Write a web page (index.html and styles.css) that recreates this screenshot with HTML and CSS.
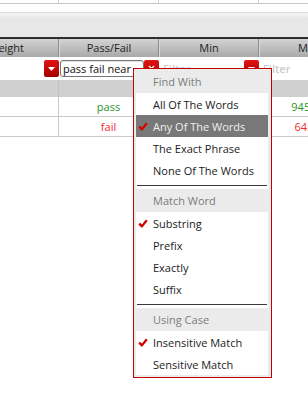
FILE: index.html
```html
<!DOCTYPE html>
<html lang="en">

<head>
    <meta charset="UTF-8">
    <title>Grid filter</title>
    <link rel="stylesheet" href="styles.css">
</head>

<body>
    <div class="cols last-row">
        <span></span><span></span><span></span><span></span>
    </div>
    <div class="spacer"></div>
    <div class="toolbar"></div>

    <div class="cols head">
        <div class="cell first">Weight</div>
        <div class="cell">Pass/Fail</div>
        <div class="cell">Min</div>
        <div class="cell">Max</div>
    </div>

    <div class="cols filters">
        <div class="cell">
            <input class="field" placeholder="Filter">
            <span class="btn">
                <svg width="7" height="4" viewBox="0 0 7 4"><path d="M0 0H7L3.5 4Z" fill="#fff"/></svg>
            </span>
        </div>
        <div class="cell">
            <input class="field focus" value="pass fail near">
            <span class="btn">
                <svg width="7" height="7" viewBox="0 0 7 7"><path d="M1 1L6 6M6 1L1 6" stroke="#fff" stroke-width="1.4"/></svg>
            </span>
        </div>
        <div class="cell">
            <input class="field" placeholder="Filter">
            <span class="btn">
                <svg width="7" height="4" viewBox="0 0 7 4"><path d="M0 0H7L3.5 4Z" fill="#fff"/></svg>
            </span>
        </div>
        <div class="cell">
            <input class="field" placeholder="Filter">
            <span class="btn">
                <svg width="7" height="4" viewBox="0 0 7 4"><path d="M0 0H7L3.5 4Z" fill="#fff"/></svg>
            </span>
        </div>
    </div>

    <div class="cols group">
        <div class="cell"></div><div class="cell"></div><div class="cell"></div><div class="cell"></div>
    </div>

    <div class="cols data">
        <div class="cell"></div>
        <div class="cell pass">pass</div>
        <div class="cell"></div>
        <div class="cell pass">945.12</div>
    </div>
    <div class="cols data">
        <div class="cell"></div>
        <div class="cell fail">fail</div>
        <div class="cell"></div>
        <div class="cell fail">64.53</div>
    </div>

    <div class="menu">
        <div class="menu-title">Find With</div>
        <div class="menu-group">
            <div class="menu-item"><span class="mark"></span>All Of The Words</div>
            <div class="menu-item active"><span class="mark"><svg width="10" height="9" viewBox="0 0 10 9"><path d="M1.2 4.6L3.9 7.4L8.8 1.2" fill="none" stroke="#d40000" stroke-width="2.3" stroke-linejoin="round"/></svg></span>Any Of The Words</div>
            <div class="menu-item"><span class="mark"></span>The Exact Phrase</div>
            <div class="menu-item"><span class="mark"></span>None Of The Words</div>
            <div class="menu-sep"></div>
        </div>
        <div class="menu-title">Match Word</div>
        <div class="menu-group">
            <div class="menu-item"><span class="mark"><svg width="10" height="9" viewBox="0 0 10 9"><path d="M1.2 4.6L3.9 7.4L8.8 1.2" fill="none" stroke="#d40000" stroke-width="2.3" stroke-linejoin="round"/></svg></span>Substring</div>
            <div class="menu-item"><span class="mark"></span>Prefix</div>
            <div class="menu-item"><span class="mark"></span>Exactly</div>
            <div class="menu-item"><span class="mark"></span>Suffix</div>
            <div class="menu-sep"></div>
        </div>
        <div class="menu-title">Using Case</div>
        <div class="menu-group">
            <div class="menu-item"><span class="mark"><svg width="10" height="9" viewBox="0 0 10 9"><path d="M1.2 4.6L3.9 7.4L8.8 1.2" fill="none" stroke="#d40000" stroke-width="2.3" stroke-linejoin="round"/></svg></span>Insensitive Match</div>
            <div class="menu-item"><span class="mark"></span>Sensitive Match</div>
        </div>
    </div>
</body>

</html>
```

FILE: styles.css
```css
* {
    margin: 0;
    padding: 0;
    box-sizing: border-box;
}

html,
body {
    width: 100%;
    height: 100%;
    background: #fff;
}

body {
    font-family: "Open Sans", sans-serif;
    font-size: 11px;
    color: #222;
    overflow: hidden;
    position: relative;
}

.cols {
    display: grid;
    grid-template-columns: repeat(4, 100px);
    width: 400px;
    margin-left: -41px;
}

.last-row {
    height: 4px;
    border-bottom: 1px solid #c6c6c6;
}

.last-row span {
    border-right: 1px solid #d2d2d2;
}

.spacer {
    height: 9px;
    border-bottom: 1px solid #d8d8d8;
}

.toolbar {
    height: 26px;
    background: linear-gradient(#f6f6f6, #e7e7e7 5px, #e7e7e7);
    border-bottom: 2px solid #2e2e2e;
}

.head {
    height: 18px;
    background: linear-gradient(#d3d3d3, #a9a9a9);
}

.head .cell {
    text-align: center;
    line-height: 18px;
    white-space: nowrap;
    overflow: hidden;
    border-right: 1px solid #8a8a8a;
    border-left: 1px solid #dadada;
}

.head .first {
    text-align: right;
    padding-right: 34px;
}

.filters {
    height: 23px;
}

.filters .cell {
    display: flex;
    padding: 3px 0 3px 1px;
}

.field {
    flex: 1;
    min-width: 0;
    border: 1px solid transparent;
    border-radius: 3px;
    padding-left: 2px;
    font-family: "Open Sans", sans-serif;
    font-size: 11px;
    color: #111;
    background: #fff;
    outline: none;
}

.field::placeholder {
    color: #cbcbcb;
    font-weight: 600;
}

.field.focus {
    border-color: #767676;
    box-shadow: inset 0 1px 1px rgba(0, 0, 0, 0.12);
}

.btn {
    width: 15px;
    flex: none;
    border-radius: 2px;
    background: linear-gradient(#e31212, #a30000);
    display: flex;
    align-items: center;
    justify-content: center;
}

.group {
    height: 17px;
    background: #cfcfcf;
}

.group .cell {
    border-right: 1px solid #c2c2c2;
}

.data {
    height: 20px;
    border-bottom: 1px solid #c9c9c9;
}

.data .cell {
    text-align: center;
    line-height: 19px;
    white-space: nowrap;
    overflow: hidden;
    border-right: 1px solid #c9c9c9;
}

.pass {
    color: #2a942a;
}

.fail {
    color: #f52a2a;
}

/* dropdown opened from the Pass/Fail filter */
.menu {
    position: absolute;
    left: 133px;
    top: 68px;
    width: 139px;
    border: 1px solid #c20000;
    background: #ebebeb;
    padding: 1px 3px 2px 2px;
}

.menu-title {
    height: 23px;
    line-height: 23px;
    padding-left: 17px;
    color: #7b7b7b;
}

.menu-group {
    background: #fff;
}

.menu-item {
    height: 22px;
    display: flex;
    align-items: center;
    color: #1c1c1c;
    white-space: nowrap;
}

.menu-item.active {
    background: #787878;
    color: #f0f0f0;
}

.mark {
    width: 17px;
    flex: none;
    display: flex;
    padding-left: 2px;
}

.menu-sep {
    height: 8px;
    display: flex;
    align-items: center;
    padding: 0 1px;
}

.menu-sep::after {
    content: "";
    flex: 1;
    border-top: 1px solid #3a3a3a;
}
```
